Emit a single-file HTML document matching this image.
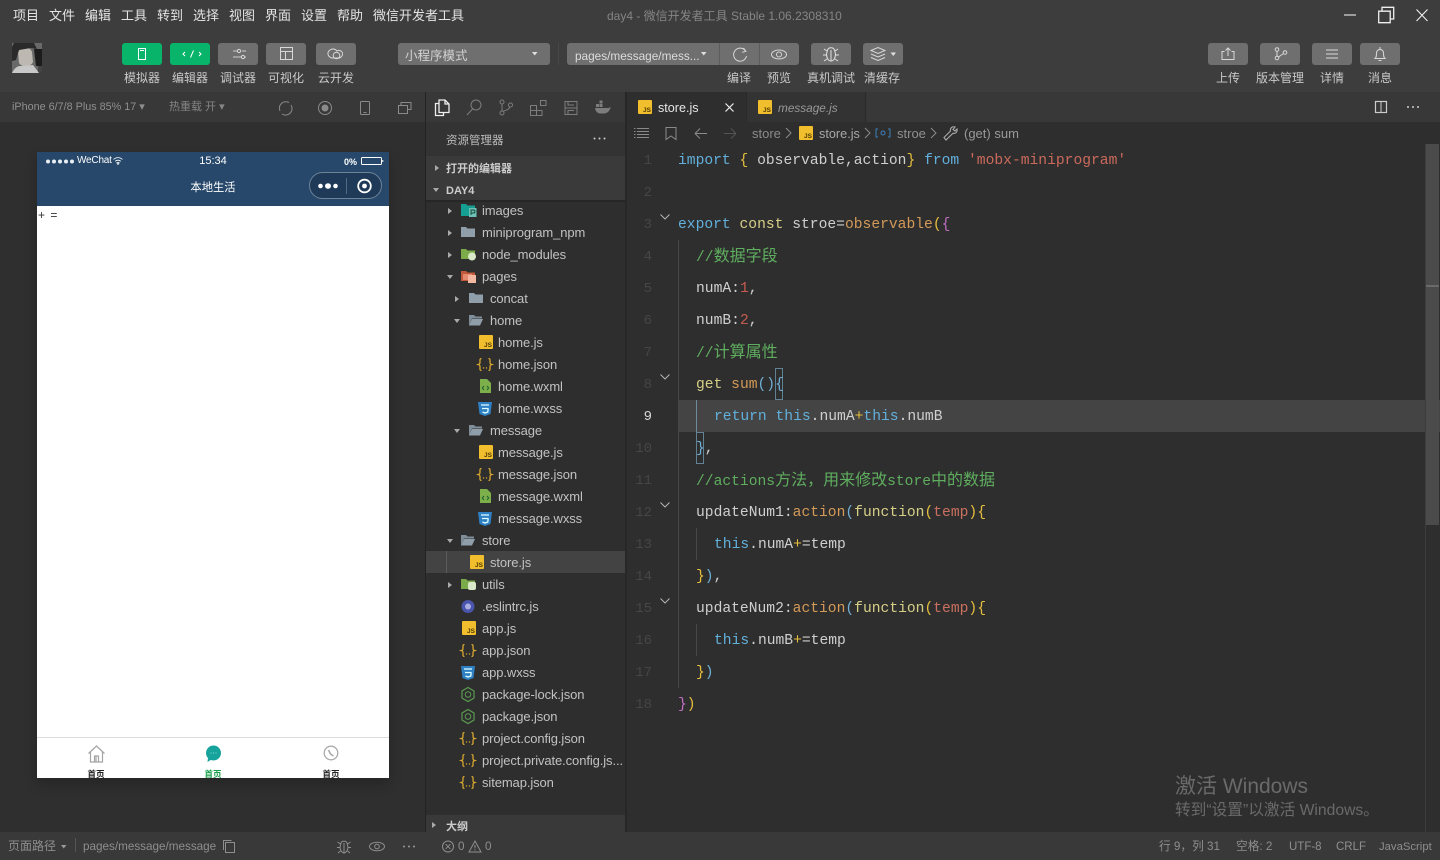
<!DOCTYPE html>
<html lang="zh"><head><meta charset="utf-8"><title>day4</title>
<style>
html,body{margin:0;padding:0;width:1440px;height:860px;overflow:hidden;background:#2e2e2e}
body{position:relative;font-family:"Liberation Sans","Noto Sans CJK SC",sans-serif;color:#c8c8c8}
.b,.t,svg,.js,.l,.n{position:absolute}
.t{white-space:nowrap;line-height:20px;font-size:12px}
.c{transform:translateX(-50%)}
.m{font-size:13px;color:#e4e4e4;top:6px}
.btn{position:absolute;top:43px;width:40px;height:22px;border-radius:3px;background:#6f6f6f}
.g{background:#07b46a}
svg{overflow:visible;fill:none;stroke:#d8d8d8;stroke-width:1}
.lb{top:67.500px;color:#c9c9c9}
.f{font-size:13px;color:#c2c2c2;letter-spacing:-.1px}
.js{width:14px;height:14px;background:#f1bf2d;border-radius:1px;color:#4c3900;font:bold 6.500px/7px "Liberation Sans",sans-serif;text-align:right;padding:6.500px 1px 0 0;box-sizing:border-box}
.l{left:678px;height:32px;line-height:34px;font-family:"Liberation Mono","Noto Sans CJK SC",monospace;font-size:14.65px;color:#cfcfcf;white-space:pre}
.n{left:628px;width:24px;height:32px;text-align:right;font:14px/34px "Liberation Mono",monospace;color:#464646}
.cj{font-size:16px}
.k{color:#62b0dc}.y{color:#d8cf87}.o{color:#d49a58}.s{color:#cb6a5c}.gd{color:#e6bf3e}.p{color:#c06fc0}.gr{color:#5fae5f}.r{color:#c45c50}.bl{color:#6fb0d8}.tp{color:#c9705f}
.st{top:837px;font-size:11.700px;color:#8e8e8e}
</style></head><body>

<!-- backgrounds -->
<div class="b" style="left:0;top:0;width:1440px;height:92px;background:#3d3d3d"></div>
<div class="b" style="left:0;top:92px;width:425px;height:30px;background:#383838"></div>
<div class="b" style="left:0;top:122px;width:425px;height:710px;background:#2f2f2f"></div>
<div class="b" style="left:425px;top:92px;width:1px;height:740px;background:#232323"></div>
<div class="b" style="left:426px;top:92px;width:200px;height:30px;background:#383838"></div>
<div class="b" style="left:426px;top:122px;width:200px;height:34px;background:#333"></div>
<div class="b" style="left:426px;top:156px;width:200px;height:44px;background:#3a3a3a"></div>
<div class="b" style="left:426px;top:200px;width:200px;height:2px;background:#262626"></div>
<div class="b" style="left:426px;top:202px;width:200px;height:630px;background:#2e2e2e"></div>
<div class="b" style="left:426px;top:815px;width:200px;height:17px;background:#393939"></div>
<div class="b" style="left:625px;top:92px;width:2px;height:740px;background:#272727"></div>
<div class="b" style="left:627px;top:92px;width:813px;height:30px;background:#383838"></div>
<div class="b" style="left:627px;top:122px;width:813px;height:710px;background:#2e2e2e"></div>
<div class="b" style="left:627px;top:92px;width:119px;height:30px;background:#2e2e2e"></div>
<div class="b" style="left:746px;top:92px;width:120px;height:30px;background:#333;border-right:1px solid #2a2a2a;border-left:1px solid #2a2a2a;box-sizing:border-box"></div>
<div class="b" style="left:0;top:832px;width:1440px;height:28px;background:#393939"></div>

<!-- menu -->
<span class="t m" style="left:13px">项目</span><span class="t m" style="left:49px">文件</span><span class="t m" style="left:85px">编辑</span><span class="t m" style="left:121px">工具</span><span class="t m" style="left:157px">转到</span><span class="t m" style="left:193px">选择</span><span class="t m" style="left:229px">视图</span><span class="t m" style="left:265px">界面</span><span class="t m" style="left:301px">设置</span><span class="t m" style="left:337px">帮助</span><span class="t m" style="left:373px">微信开发者工具</span>
<span class="t" style="left:607px;top:6px;color:#858585;font-size:12px">day4 - 微信开发者工具 Stable 1.06.2308310</span>
<svg style="left:1344px;top:9px" width="96" height="14"><path d="M0 6h12" stroke="#bdbdbd" stroke-width="1.500"/><path d="M34.700 2.200h11.500v11.500H34.700zM38 2V-1.700h11.700V10H46" stroke="#eee" stroke-width="1.300"/><path d="M72.500.5l11 11.500M83.500.5l-11 11.500" stroke="#eee" stroke-width="1.100"/></svg>

<!-- avatar -->
<svg style="left:12px;top:43px" width="30" height="30"><rect width="30" height="30" rx="2" fill="#444" stroke="none"/><path d="M0 0h30v8l-4 9v13H0z" fill="#696969" stroke="none"/><path d="M6 9c3-6 12-6 14 0l1 10c-2 5-11 6-14 1z" fill="#bdb8b2" stroke="none"/><path d="M2 0h20l3 6-6-1-12 2-3 10-4 1V4z" fill="#2a2a2a" stroke="none"/><path d="M0 30c3-6 6-7 9-7l12-1 6 8z" fill="#c8c8c8" stroke="none"/><path d="M22 6h8v17h-6z" fill="#1c1c1c" stroke="none"/></svg>

<!-- toolbar left -->
<div class="btn g" style="left:122px"></div><div class="btn g" style="left:170px"></div><div class="btn" style="left:218px"></div><div class="btn" style="left:266px"></div><div class="btn" style="left:316px"></div>
<svg style="left:122px;top:43px" width="240" height="22">
<rect x="16.500" y="5.500" width="7" height="11" stroke="#fff"/><path d="M18 7.500h4" stroke="#fff"/>
<path d="M63 9l-2 2 2 2M77 9l2 2-2 2M71.500 7.500l-3 7" stroke="#fff"/>
<path d="M111 8h4M120 8h4M111 14h8M123 14h1" stroke="#ccc"/><circle cx="117" cy="8" r="1.600"/><circle cx="121" cy="14" r="1.600"/>
<rect x="158.500" y="4.500" width="12" height="12"/><path d="M158.500 8.500h12M163.500 8.500v8"/>
<path d="M208 14a4 4 0 0 1 0-7 5 5 0 0 1 7 1 3.500 3.500 0 0 1 4 6 3 3 0 0 1-3 1h-6a3 3 0 0 1-2-1z"/><circle cx="214.500" cy="12.500" r="3.300"/>
</svg>
<span class="t c lb" style="left:142px">模拟器</span><span class="t c lb" style="left:190px">编辑器</span><span class="t c lb" style="left:238px">调试器</span><span class="t c lb" style="left:286px">可视化</span><span class="t c lb" style="left:336px">云开发</span>

<div class="btn" style="left:398px;width:152px"></div>
<span class="t" style="left:405px;top:46px;color:#d2d2d2;font-size:12.500px">小程序模式</span>
<svg style="left:532px;top:52px" width="6" height="4"><path d="M0 0h5.500L2.700 3.500z" fill="#e0e0e0" stroke="none"/></svg>
<div class="b" style="left:558px;top:43px;width:1px;height:22px;background:#484848"></div>
<div class="btn" style="left:567px;width:232px"></div>
<div class="b" style="left:719px;top:43px;width:1px;height:22px;background:#5c5c5c"></div>
<div class="b" style="left:759px;top:43px;width:1px;height:22px;background:#5c5c5c"></div>
<span class="t" style="left:575px;top:46px;color:#dcdcdc;font-size:11.800px">pages/message/mess...</span>
<svg style="left:701px;top:52px" width="6" height="4"><path d="M0 0h5.500L2.700 3.500z" fill="#e0e0e0" stroke="none"/></svg>
<svg style="left:719px;top:43px" width="80" height="22"><path d="M26.500 8a6.500 6.500 0 1 0 1 5"/><path d="M24.500 5l2.300 3.300-3.700 1"/><ellipse cx="60" cy="11.500" rx="7.500" ry="4.500"/><circle cx="60" cy="11.500" r="2.500"/></svg>
<div class="btn" style="left:811px"></div><div class="btn" style="left:863px"></div>
<svg style="left:811px;top:43px" width="92" height="22"><path d="M16.500 7c1-3 6-3 7 0l1 4c0 4-2 7-4.500 7s-4.500-3-4.500-7zM20 7v11M16 8l-3-2M24 8l3-2M15.500 12H12M24.500 12H28M16 16l-3 2M24 16l3 2" stroke="#e0e0e0"/><path d="M60 7.500l7-3 7 3-7 3zM60 11l7 3 7-3M60 14.500l7 3 7-3"/><path d="M79.500 9.500h5.500l-2.700 3.500z" fill="#e0e0e0" stroke="none"/></svg>
<span class="t c lb" style="left:739px">编译</span><span class="t c lb" style="left:779px">预览</span><span class="t c lb" style="left:831px">真机调试</span><span class="t c lb" style="left:882px">清缓存</span>

<!-- toolbar right -->
<div class="btn" style="left:1208px"></div><div class="btn" style="left:1260px"></div><div class="btn" style="left:1312px"></div><div class="btn" style="left:1360px"></div>
<svg style="left:1208px;top:43px" width="192" height="22"><path d="M16.500 8.500H14v8h12v-8h-2.500M20 13V5M17.500 7.500L20 5l2.500 2.500"/><circle cx="69" cy="6.500" r="1.800"/><circle cx="69" cy="15" r="1.800"/><circle cx="77" cy="9.500" r="1.800"/><path d="M69 8.500v4.500M70.500 14l5-3.500"/><path d="M118 7h12M118 11h12M118 15h12"/><path d="M167 15.500c1.500-1.200 1.500-3 1.500-5.500 0-2 1.500-3.500 3.500-3.500s3.500 1.500 3.500 3.500c0 2.500 0 4.300 1.500 5.500zM172 4v2.500M170.500 17.500h3"/></svg>
<span class="t c lb" style="left:1228px">上传</span><span class="t c lb" style="left:1280px">版本管理</span><span class="t c lb" style="left:1332px">详情</span><span class="t c lb" style="left:1380px">消息</span>

<!-- simulator bar -->
<span class="t" style="left:12px;top:97px;font-size:10.800px;color:#8f8f8f">iPhone 6/7/8 Plus 85% 17 ▾</span>
<span class="t" style="left:169px;top:97px;font-size:11px;color:#858585">热重载 开 ▾</span>
<svg style="left:277px;top:100px;stroke:#8a8a8a" width="140" height="16"><path d="M3 11a6.500 6.500 0 0 1 9-8.500M14 5a6.500 6.500 0 0 1-9 9"/><circle cx="48" cy="8" r="6.500"/><circle cx="48" cy="8" r="3" fill="#8a8a8a"/><rect x="83.500" y="1.500" width="9" height="13" rx="1"/><path d="M86.500 12.500h3"/><rect x="121.500" y="5.500" width="9" height="8"/><path d="M124 5V2.500h10v7h-3"/></svg>

<!-- phone -->
<div class="b" style="left:37px;top:152px;width:352px;height:626px;background:#fff;box-shadow:0 6px 12px rgba(0,0,0,.22)"></div>
<div class="b" style="left:37px;top:152px;width:352px;height:54px;background:#27486b"></div>
<svg style="left:46px;top:159px;stroke:none;fill:#e8eef3" width="28" height="5"><circle cx="2" cy="2.500" r="2"/><circle cx="8" cy="2.500" r="2"/><circle cx="14" cy="2.500" r="2"/><circle cx="20" cy="2.500" r="2"/><circle cx="26" cy="2.500" r="2"/></svg>
<span class="t" style="left:77px;top:151px;font-size:10px;color:#fff;letter-spacing:-.2px">WeChat</span>
<svg style="left:113px;top:157px" width="10" height="8"><path d="M.5 2.500c2.500-2.500 6.500-2.500 9 0M2.200 4.300c1.500-1.500 4-1.500 5.600 0M5 7.500L3.800 5.800c.7-.5 1.700-.5 2.400 0z" stroke="#fff" stroke-width=".8"/></svg>
<span class="t c" style="left:213px;top:151px;font-size:11px;color:#fff">15:34</span>
<span class="t" style="left:344px;top:152px;font-size:9px;color:#fff;font-weight:bold">0%</span>
<svg style="left:361px;top:157px" width="22" height="8"><rect x=".5" y=".5" width="20" height="7" rx="1" stroke="#fff"/><path d="M21.800 3v2" stroke="#fff"/></svg>
<span class="t c" style="left:213px;top:178px;font-size:11.300px;color:#fff">本地生活</span>
<div class="b" style="left:309px;top:172px;width:73px;height:27px;border:1px solid #6d8397;border-radius:14px;background:#1e3a58;box-sizing:border-box"></div>
<svg style="left:309px;top:172px" width="73" height="27"><circle cx="11.500" cy="14" r="2.300" fill="#fff" stroke="none"/><ellipse cx="19" cy="14" rx="3" ry="2.800" fill="#fff" stroke="none"/><circle cx="26.500" cy="14" r="2.300" fill="#fff" stroke="none"/><path d="M37.500 6v16" stroke="#506a82"/><circle cx="55.500" cy="14" r="6.300" stroke="#fff" stroke-width="1.800"/><circle cx="55.500" cy="14" r="2.400" fill="#fff" stroke="none"/></svg>
<span class="t" style="left:38px;top:205px;font-size:12px;color:#333;letter-spacing:1px">+ =</span>
<div class="b" style="left:37px;top:737px;width:352px;height:1px;background:#ddd"></div>
<svg style="left:87px;top:744px;stroke:#a5a5a5" width="20" height="20"><path d="M1.500 9.500L9.500 2l8 7.500M3.500 8v10h12V8M7.500 18v-6h4v6M9 12v6" stroke-width="1.200"/></svg>
<svg style="left:205px;top:745px" width="18" height="18"><circle cx="8.500" cy="8" r="7.500" fill="#16a39c" stroke="none"/><path d="M3 13l-.5 4 4-2.500z" fill="#16a39c" stroke="none"/><path d="M5.500 8h1M8 8h1M10.500 8h1" stroke="#7fdcd6"/></svg>
<svg style="left:323px;top:745px;stroke:#aaa" width="16" height="16"><circle cx="8" cy="8" r="6.800" stroke-width="1.300"/><path d="M5.500 5l2 4 3 2" stroke-width="1.600"/></svg>
<span class="t c" style="left:96px;top:764px;font-size:8.500px;color:#222;font-weight:bold;height:14px;overflow:hidden">首页</span>
<span class="t c" style="left:213px;top:764px;font-size:8.500px;color:#19a04b;font-weight:bold;height:14px;overflow:hidden">首页</span>
<span class="t c" style="left:331px;top:764px;font-size:8.500px;color:#222;font-weight:bold;height:14px;overflow:hidden">首页</span>

<!-- activity icons -->
<svg style="left:434px;top:99px" width="180" height="18"><path d="M5.500 4.500H1.500v12h8v-3M5 1h6l4 4v8.500H5zM11 1v4h4" stroke="#eee" stroke-width="1.300"/><g stroke="#7d7d7d"><circle cx="42" cy="6" r="5"/><path d="M38.500 10L33 16"/><circle cx="68" cy="3" r="2"/><circle cx="68" cy="14" r="2"/><circle cx="76.500" cy="6" r="2"/><path d="M68 5v7M69.500 12c4-1 6-2 6.500-4.500"/><path d="M96.500 6.500h6v5h-6zM96.500 11.500h6v5h-6zM102.500 11.500h5.500v5h-5.500zM106.500 1.500h5.500v5h-5.500z"/><path d="M131 2.500h12v13h-12zM131 9h12M134 2.500v3.500h6M134 15v-3.500h6"/></g><path d="M161 9h13c1 0 2-.5 2.500-1.500 0 4-3 7-7 7h-3c-3 0-5-2-5.500-5.500z" fill="#7d7d7d" stroke="none"/><path d="M162 5h3v3h-3zM165.500 5h3v3h-3zM165.500 1.500h3v3h-3z" fill="#7d7d7d" stroke="none"/></svg>

<!-- explorer -->
<span class="t" style="left:446px;top:131px;font-size:11.500px;color:#bdbdbd">资源管理器</span>
<svg style="left:593px;top:137px" width="14" height="4"><circle cx="1.500" cy="1.500" r="1" fill="#ccc" stroke="none"/><circle cx="6.500" cy="1.500" r="1" fill="#ccc" stroke="none"/><circle cx="11.500" cy="1.500" r="1" fill="#ccc" stroke="none"/></svg>
<span class="t" style="left:446px;top:158.500px;font-size:11px;color:#ccc;font-weight:bold">打开的编辑器</span>
<span class="t" style="left:446px;top:180.500px;font-size:11px;color:#ccc;font-weight:bold">DAY4</span>
<span class="t" style="left:446px;top:816.500px;font-size:11px;color:#ccc;font-weight:bold">大纲</span>

<div class="b" style="left:426px;top:551px;width:199px;height:22px;background:#434343"></div>
<div class="b" style="left:446px;top:551px;width:1px;height:22px;background:#5c5c5c"></div>

<svg style="left:426px;top:160px" width="34" height="670"><path d="M9 5l4 3-4 3z" fill="#aaa" stroke="none"/><path d="M7 28h6l-3 4z" fill="#aaa" stroke="none"/>
<g fill="#aaa" stroke="none">
<path d="M22 48l4 3-4 3zM22 70l4 3-4 3zM22 92l4 3-4 3z"/><path d="M21 115h6l-3 4z"/><path d="M29 136l4 3-4 3z"/><path d="M28 159h6l-3 4z"/><path d="M28 269h6l-3 4z"/><path d="M21 379h6l-3 4z"/><path d="M22 422l4 3-4 3z"/><path d="M6 662l4 3-4 3z"/></g></svg>

<svg style="left:426px;top:202px;stroke:none" width="200" height="600">
<defs><g id="fo"><path d="M0 2h5l1.500 1.500H14V12H0z" fill="#8f9ea9"/></g><g id="fp"><path d="M0 2h5l1.500 1.500H13v2H3L0 12z" fill="#7f8e99"/><path d="M0 2v10l3-6h11l-3 6.500H0z" fill="#8f9ea9"/></g>
<g id="jn"><path d="M4.500 1.500C2.500 1.500 3 3 3 5S2.500 7 1 7.500C2.500 8 3 8 3 10s-.5 3.500 1.500 3.500M11.500 1.500c2 0 1.500 1.500 1.500 3.500s.5 2 2 2.500c-1.500.5-2 .5-2 2.500s.5 3.500-1.500 3.500" fill="none" stroke="#d6a62e" stroke-width="1.300"/><circle cx="6.500" cy="11" r=".7" fill="#d6a62e"/><circle cx="9.500" cy="11" r=".7" fill="#d6a62e"/></g>
<g id="cs"><path d="M1 1h14l-1.500 12L8 15l-5.500-2z" fill="#2f7fc4"/><path d="M4 4h8M5 7.500h6.500M5.500 11l2.500 1 2.800-1 .4-3.500" fill="none" stroke="#dff" stroke-width="1.300"/></g>
<g id="wx"><path d="M1 0h7l4 4v10H1z" fill="#7db04a"/><path d="M5 7L3.300 9 5 11M8 7l1.700 2L8 11" fill="none" stroke="#263" stroke-width="1.100"/></g>
<g id="nd"><path d="M7 .5l6 3.500v7l-6 3.500L1 11V4z" fill="none" stroke="#5c9a52" stroke-width="1.200"/><circle cx="7" cy="7.500" r="2.800" fill="none" stroke="#5c9a52"/></g></defs>
<g transform="translate(35,2)"><path d="M0 0h5l1.500 1.500H14V12H0z" fill="#159f92"/><rect x="8" y="4" width="7.500" height="9" fill="#6fc0b6"/><path d="M10 11V6h2.500a1.500 1.500 0 0 1 0 3H10" fill="none" stroke="#143" stroke-width=".9"/></g>
<use href="#fo" x="35" y="23"/>
<g transform="translate(35,45)"><path d="M0 2h5l1.500 1.500H14V12H0z" fill="#7cac49"/><circle cx="11" cy="9.500" r="4" fill="#d8e8c8"/></g>
<g transform="translate(35,67)"><path d="M0 2h5l1.500 1.500H14V12H0z" fill="#c2593a"/><rect x="2" y="5" width="9" height="6" fill="#e58a6e"/><rect x="7" y="6" width="8" height="8" fill="#f2b7a0"/></g>
<use href="#fo" x="43" y="89"/><use href="#fp" x="43" y="111"/>
<use href="#jn" x="51" y="155"/><use href="#wx" x="53" y="177"/><use href="#cs" x="51" y="199"/>
<use href="#fp" x="43" y="221"/>
<use href="#jn" x="51" y="265"/><use href="#wx" x="53" y="287"/><use href="#cs" x="51" y="309"/>
<use href="#fp" x="35" y="331"/>
<g transform="translate(35,375)"><path d="M0 2h5l1.500 1.500H14V12H0z" fill="#7cac49"/><rect x="7" y="5" width="8" height="8" rx="2" fill="#d8e8c8"/></g>
<g transform="translate(35,397)"><circle cx="7" cy="7.500" r="6.500" fill="#4b55ad"/><circle cx="7" cy="7.500" r="3" fill="#a9afe0"/></g>
<use href="#jn" x="34" y="441"/><use href="#cs" x="34" y="463"/><use href="#nd" x="35" y="485"/><use href="#nd" x="35" y="507"/><use href="#jn" x="34" y="529"/><use href="#jn" x="34" y="551"/><use href="#jn" x="34" y="573"/>
</svg>
<div class="js" style="left:479px;top:335px"><span>JS</span></div>
<div class="js" style="left:479px;top:445px">JS</div>
<div class="js" style="left:470px;top:555px">JS</div>
<div class="js" style="left:462px;top:621px">JS</div>

<span class="t f" style="left:482px;top:201px">images</span>
<span class="t f" style="left:482px;top:223px">miniprogram_npm</span>
<span class="t f" style="left:482px;top:245px">node_modules</span>
<span class="t f" style="left:482px;top:267px">pages</span>
<span class="t f" style="left:490px;top:289px">concat</span>
<span class="t f" style="left:490px;top:311px">home</span>
<span class="t f" style="left:498px;top:333px">home.js</span>
<span class="t f" style="left:498px;top:355px">home.json</span>
<span class="t f" style="left:498px;top:377px">home.wxml</span>
<span class="t f" style="left:498px;top:399px">home.wxss</span>
<span class="t f" style="left:490px;top:421px">message</span>
<span class="t f" style="left:498px;top:443px">message.js</span>
<span class="t f" style="left:498px;top:465px">message.json</span>
<span class="t f" style="left:498px;top:487px">message.wxml</span>
<span class="t f" style="left:498px;top:509px">message.wxss</span>
<span class="t f" style="left:482px;top:531px">store</span>
<span class="t f" style="left:490px;top:553px">store.js</span>
<span class="t f" style="left:482px;top:575px">utils</span>
<span class="t f" style="left:482px;top:597px">.eslintrc.js</span>
<span class="t f" style="left:482px;top:619px">app.js</span>
<span class="t f" style="left:482px;top:641px">app.json</span>
<span class="t f" style="left:482px;top:663px">app.wxss</span>
<span class="t f" style="left:482px;top:685px">package-lock.json</span>
<span class="t f" style="left:482px;top:707px">package.json</span>
<span class="t f" style="left:482px;top:729px">project.config.json</span>
<span class="t f" style="left:482px;top:751px">project.private.config.js...</span>
<span class="t f" style="left:482px;top:773px">sitemap.json</span>

<!-- tabs -->
<div class="js" style="left:638px;top:100px">JS</div>
<span class="t" style="left:658px;top:97.500px;font-size:12.600px;color:#e6e6e6">store.js</span>
<svg style="left:725px;top:103px" width="9" height="9"><path d="M.5.500l8 8M8.500.500l-8 8" stroke="#eee" stroke-width="1.200"/></svg>
<div class="js" style="left:758px;top:100px">JS</div>
<span class="t" style="left:778px;top:97.500px;font-size:11.800px;color:#999;font-style:italic">message.js</span>
<svg style="left:1375px;top:101px" width="50" height="12"><rect x=".5" y=".5" width="11" height="11" stroke="#ccc" stroke-width="1.200"/><path d="M6 .500v11" stroke="#ccc"/><circle cx="33" cy="6" r="1" fill="#ccc" stroke="none"/><circle cx="38" cy="6" r="1" fill="#ccc" stroke="none"/><circle cx="43" cy="6" r="1" fill="#ccc" stroke="none"/></svg>

<!-- breadcrumb -->
<svg style="left:634px;top:126px;stroke:#8a8a8a" width="140" height="14"><path d="M0 2.500h1.500M3 2.500h12M0 5.500h1.500M3 5.500h12M0 8.500h1.500M3 8.500h12M0 11.500h1.500M3 11.500h12"/><path d="M32 1.500h10v12l-5-3.500-5 3.500z"/><path d="M61 7.500h12M61 7.500l5-5M61 7.500l5 5"/><path d="M90 7.500h12M102 7.500l-5-5M102 7.500l-5 5" stroke="#555"/></svg>
<span class="t" style="left:752px;top:123.500px;font-size:13px;color:#8b8b8b">store</span>
<svg style="left:785px;top:127px;stroke:#8b8b8b" width="170" height="12"><path d="M1 1l5 5-5 5M80 1l5 5-5 5M146 1l5 5-5 5"/><path d="M93 2h-2v8h2M103 2h2v8h-2" stroke="#3d7fbf"/><circle cx="98" cy="6" r="2" stroke="#3d7fbf"/></svg>
<div class="js" style="left:799px;top:126px">JS</div>
<span class="t" style="left:819px;top:123.500px;font-size:12.700px;color:#a8a8a8">store.js</span>
<span class="t" style="left:897px;top:123.500px;font-size:13px;color:#909090">stroe</span>
<svg style="left:943px;top:126px;stroke:#aaa" width="16" height="14"><path d="M1 11.500l6.500-6.500c-.7-2.500 1.500-5 4.500-4l-2 2.500 2 1.500 2-2c.7 3-1.500 5-4 4.200L3 14z" stroke-width="1.100"/></svg>
<span class="t" style="left:964px;top:123.500px;font-size:13px;color:#999">(get) sum</span>

<!-- editor -->
<div class="b" style="left:678px;top:400px;width:762px;height:32px;background:#444"></div>
<div class="b" style="left:678px;top:240px;width:1px;height:448px;background:#474747"></div>
<div class="b" style="left:696px;top:400px;width:1px;height:32px;background:#6c8b9c"></div>
<div class="b" style="left:696px;top:528px;width:1px;height:32px;background:#474747"></div>
<div class="b" style="left:696px;top:624px;width:1px;height:32px;background:#474747"></div>
<div class="b" style="left:775px;top:368px;width:8px;height:32px;border:1px solid #5f8294;box-sizing:border-box"></div>
<div class="b" style="left:696px;top:432px;width:8px;height:32px;border:1px solid #5f8294;box-sizing:border-box"></div>

<span class="n" style="top:144px">1</span><span class="n" style="top:176px">2</span><span class="n" style="top:208px">3</span><span class="n" style="top:240px">4</span><span class="n" style="top:272px">5</span><span class="n" style="top:304px">6</span><span class="n" style="top:336px">7</span><span class="n" style="top:368px">8</span><span class="n" style="top:400px;color:#d8d8d8">9</span><span class="n" style="top:432px">10</span><span class="n" style="top:464px">11</span><span class="n" style="top:496px">12</span><span class="n" style="top:528px">13</span><span class="n" style="top:560px">14</span><span class="n" style="top:592px">15</span><span class="n" style="top:624px">16</span><span class="n" style="top:656px">17</span><span class="n" style="top:688px">18</span>
<svg style="left:660px;top:214px;stroke:#b5b5b5" width="10" height="390"><path d="M.5.500L5 5 9.500.500M.5 160.500L5 165l4.500-4.500M.5 288.500L5 293l4.500-4.500M.5 384.500L5 389l4.500-4.500"/></svg>

<div class="l" style="top:144px"><span class="k">import</span> <span class="gd">{</span> observable,action<span class="gd">}</span> <span class="k">from</span> <span class="s">'mobx-miniprogram'</span></div>
<div class="l" style="top:208px"><span class="k">export</span> <span class="y">const</span> stroe=<span class="o">observable</span><span class="gd">(</span><span class="p">{</span></div>
<div class="l" style="top:240px;left:696px"><span class="gr">//<span class="cj">数据字段</span></span></div>
<div class="l" style="top:272px;left:696px">numA:<span class="r">1</span>,</div>
<div class="l" style="top:304px;left:696px">numB:<span class="r">2</span>,</div>
<div class="l" style="top:336px;left:696px"><span class="gr">//<span class="cj">计算属性</span></span></div>
<div class="l" style="top:368px;left:696px"><span class="y">get</span> <span class="o">sum</span><span class="bl">()</span><span class="bl">{</span></div>
<div class="l" style="top:400px;left:714px"><span class="k">return</span> <span class="k">this</span>.numA<span class="gd">+</span><span class="k">this</span>.numB</div>
<div class="l" style="top:432px;left:696px"><span class="bl">}</span>,</div>
<div class="l" style="top:464px;left:696px"><span class="gr">//actions<span class="cj">方法，用来修改</span>store<span class="cj">中的数据</span></span></div>
<div class="l" style="top:496px;left:696px">updateNum1:<span class="o">action</span><span class="bl">(</span><span class="y">function</span><span class="gd">(</span><span class="tp">temp</span><span class="gd">){</span></div>
<div class="l" style="top:528px;left:714px"><span class="k">this</span>.numA<span class="gd">+</span>=temp</div>
<div class="l" style="top:560px;left:696px"><span class="gd">}</span><span class="bl">)</span>,</div>
<div class="l" style="top:592px;left:696px">updateNum2:<span class="o">action</span><span class="bl">(</span><span class="y">function</span><span class="gd">(</span><span class="tp">temp</span><span class="gd">){</span></div>
<div class="l" style="top:624px;left:714px"><span class="k">this</span>.numB<span class="gd">+</span>=temp</div>
<div class="l" style="top:656px;left:696px"><span class="gd">}</span><span class="bl">)</span></div>
<div class="l" style="top:688px"><span class="p">}</span><span class="gd">)</span></div>

<!-- scrollbar -->
<div class="b" style="left:1425px;top:144px;width:14px;height:381px;background:#4b4b4b"></div>
<div class="b" style="left:1425px;top:144px;width:1px;height:688px;background:#3d3d3d"></div>
<div class="b" style="left:1426px;top:285px;width:13px;height:2px;background:#6a6a6a"></div>

<!-- watermark -->
<span class="t" style="left:1175px;top:777px;font-size:21px;color:#6a6a6a">激活 Windows</span>
<span class="t" style="left:1175px;top:801px;font-size:15.700px;color:#6a6a6a">转到“设置”以激活 Windows。</span>

<!-- status bar -->
<span class="t" style="left:8px;top:836px;font-size:12px;color:#8e8e8e">页面路径</span>
<svg style="left:61px;top:845px" width="6" height="4"><path d="M0 0h5.500L2.700 3.500z" fill="#999" stroke="none"/></svg>
<div class="b" style="left:75px;top:838px;width:1px;height:14px;background:#555"></div>
<span class="t st" style="left:83px">pages/message/message</span>
<svg style="left:223px;top:840px;stroke:#8e8e8e" width="12" height="13"><path d="M2.500 2.500h9v10h-9zM.5 10V.5h8"/></svg>
<svg style="left:336px;top:839px;stroke:#8e8e8e" width="85" height="15"><path d="M5 4c1-2.500 5-2.500 6 0l1 4c0 3-2 6-4 6s-4-3-4-6zM8 4v10M4.500 5L1.500 3M11.500 5l3-2M4 8.500H1M12 8.500h3M4.500 12L2 14M11.500 12l2.500 2"/><ellipse cx="41" cy="7.500" rx="7.500" ry="4.300"/><circle cx="41" cy="7.500" r="2.300"/><circle cx="68" cy="7.500" r="1" fill="#999" stroke="none"/><circle cx="73" cy="7.500" r="1" fill="#999" stroke="none"/><circle cx="78" cy="7.500" r="1" fill="#999" stroke="none"/></svg>
<svg style="left:442px;top:840px;stroke:#8e8e8e" width="40" height="13"><circle cx="6" cy="6.500" r="5.500"/><path d="M3.700 4.200l4.600 4.600M8.300 4.200L3.700 8.800"/><path d="M33.500 1L39.500 12h-12zM33.500 5v3.500M33.500 9.500v1" transform="translate(-.5)"/></svg>
<span class="t st" style="left:458px">0</span>
<span class="t st" style="left:485px">0</span>
<span class="t st" style="left:1159px">行 9，列 31</span>
<span class="t st" style="left:1236px">空格: 2</span>
<span class="t st" style="left:1289px;font-size:11.500px">UTF-8</span>
<span class="t st" style="left:1336px;font-size:11.500px">CRLF</span>
<span class="t st" style="left:1379px;font-size:11.300px">JavaScript</span>
</body></html>
